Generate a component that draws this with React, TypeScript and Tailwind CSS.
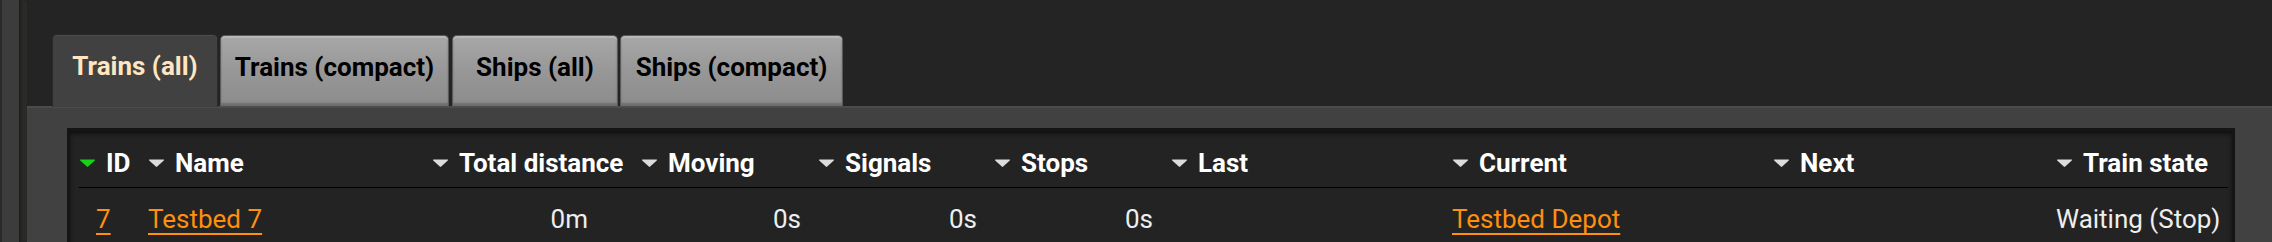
import React from 'react';

const font = { fontFamily: 'Roboto, "Noto Sans", sans-serif' };

function Arrow({ green = false }: { green?: boolean }) {
  return (
    <svg width="17" height="10" viewBox="0 0 17 10" className="shrink-0">
      <path
        d="M1.5 1.5 H15.5 Q16.5 1.5 15.8 2.4 L9.2 8.6 Q8.5 9.3 7.8 8.6 L1.2 2.4 Q0.5 1.5 1.5 1.5 Z"
        fill={green ? '#14d414' : '#dcdcdc'}
      />
    </svg>
  );
}

const columns = [
  { label: 'ID', width: 'w-[69px]', green: true },
  { label: 'Name', width: 'w-[284px]' },
  { label: 'Total distance', width: 'w-[209px]' },
  { label: 'Moving', width: 'w-[177px]' },
  { label: 'Signals', width: 'w-[176px]' },
  { label: 'Stops', width: 'w-[177px]' },
  { label: 'Last', width: 'w-[281px]' },
  { label: 'Current', width: 'w-[321px]' },
  { label: 'Next', width: 'w-[283px]' },
  { label: 'Train state', width: 'w-[172px]' },
];

function Tab({ label, active, width }: { label: string; active?: boolean; width: string }) {
  if (active) {
    return (
      <div
        className={`${width} h-[73px] -mb-px flex items-start justify-center pt-[12px] rounded-t-[5px] bg-[#414141] border-t border-x border-[#2c2a28] shadow-[inset_0_1px_0_#4c4c4c] text-[#ffe6c0] font-bold text-[26px] relative z-10`}
      >
        {label}
      </div>
    );
  }
  return (
    <div
      className={`${width} h-[71px] flex items-start justify-center pt-[12px] rounded-t-[5px] bg-gradient-to-b from-[#a8a8a8] via-[#979797] to-[#8c8c8c] border border-b-0 border-[#5a5a5a] shadow-[inset_0_2px_0_#b9b9b9,inset_0_-3px_2px_#6e6e6e] text-black font-bold text-[26px]`}
    >
      {label}
    </div>
  );
}

export default function App() {
  return (
    <div className="w-[2272px] h-[242px] bg-[#242424] flex overflow-hidden" style={font}>
      {/* outer frame strip */}
      <div className="w-[27px] h-full flex shrink-0">
        <div className="w-[2px] bg-[#2a2a2a]" />
        <div className="w-[17px] bg-[#3c3c3c]" />
        <div className="w-[8px] bg-[#2c2a29] shadow-[inset_2px_0_2px_#1e1e1e]" />
      </div>

      <div className="flex-1 flex flex-col pt-[34px] min-w-0">
        {/* tabs */}
        <div className="flex items-end pl-[25px] h-[72px]">
          <Tab label="Trains (all)" active width="w-[166px]" />
          <div className="w-[2px]" />
          <Tab label="Trains (compact)" width="w-[229px]" />
          <div className="w-[3px]" />
          <Tab label="Ships (all)" width="w-[166px]" />
          <div className="w-[2px]" />
          <Tab label="Ships (compact)" width="w-[223px]" />
        </div>

        {/* panel */}
        <div className="flex-1 bg-[#414141] border-t-2 border-[#4e4c4b] pl-[40px] pt-[20px]">
          <div className="w-[2168px] h-full bg-[#232323] border-t-[3px] border-l-[3px] border-r-[3px] border-[#161514] shadow-[inset_0_3px_4px_#111]">
            {/* header */}
            <div className="ml-[9px] mr-[4px] h-[57px] pt-[8px] flex items-center border-b border-black">
              {columns.map((c) => (
                <div key={c.label} className={`${c.width} shrink-0 flex items-center gap-[10px] text-white font-bold text-[26px] leading-none`}>
                  <Arrow green={c.green} />
                  <span>{c.label}</span>
                </div>
              ))}
            </div>
            {/* row */}
            <div className="ml-[9px] mr-[4px] h-[62px] flex items-center text-[26px] leading-none text-[#eeeeee]">
              <div className="w-[69px] shrink-0 pl-[17px]">
                <a className="text-[#ff8f0f] underline underline-offset-[5px] decoration-2">7</a>
              </div>
              <div className="w-[284px] shrink-0">
                <a className="text-[#ff8f0f] underline underline-offset-[5px] decoration-2">Testbed 7</a>
              </div>
              <div className="w-[209px] shrink-0 text-right pr-[53px]">0m</div>
              <div className="w-[177px] shrink-0 text-right pr-[17px]">0s</div>
              <div className="w-[176px] shrink-0 text-right pr-[17px]">0s</div>
              <div className="w-[177px] shrink-0 text-right pr-[18px]">0s</div>
              <div className="w-[281px] shrink-0" />
              <div className="w-[321px] shrink-0">
                <a className="text-[#ff8f0f] underline underline-offset-[5px] decoration-2">Testbed Depot</a>
              </div>
              <div className="w-[283px] shrink-0" />
              <div className="w-[172px] shrink-0 whitespace-nowrap">Waiting (Stop)</div>
            </div>
          </div>
        </div>
      </div>
    </div>
  );
}
